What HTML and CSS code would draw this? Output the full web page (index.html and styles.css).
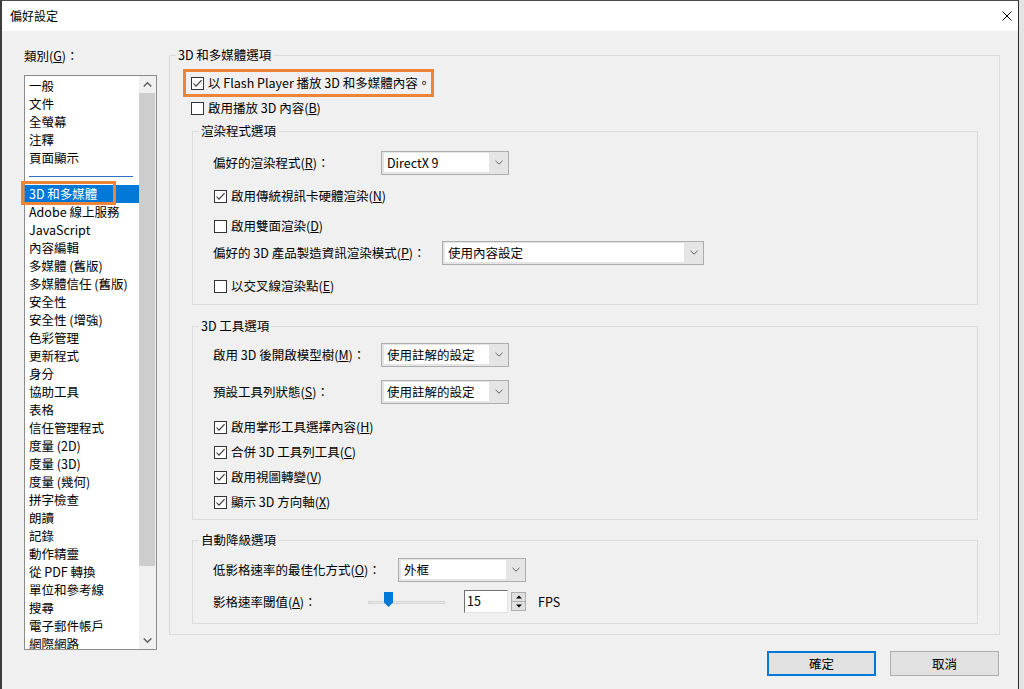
FILE: index.html
```html
<!DOCTYPE html>
<html lang="zh-Hant">
<head>
<meta charset="utf-8">
<title>偏好設定</title>
<link rel="stylesheet" href="styles.css">
</head>
<body>
<div class="window">
  <div class="titlebar">
    <span class="title">偏好設定</span>
    <svg class="close" viewBox="0 0 10 10"><path d="M0.5 0.5L9.5 9.5M9.5 0.5L0.5 9.5" stroke="#000" stroke-width="1" fill="none"/></svg>
  </div>
  <div class="client">
    <div class="main">
      <div class="left">
        <div class="cat-label">類別(<u>G</u>)：</div>
        <div class="listbox">
          <ul class="items">
            <li>一般</li>
            <li>文件</li>
            <li>全螢幕</li>
            <li>注釋</li>
            <li>頁面顯示</li>
            <li class="sep"><span class="sep-line"></span></li>
            <li class="selected">3D 和多媒體<span class="mark list-mark"></span></li>
            <li>Adobe 線上服務</li>
            <li>JavaScript</li>
            <li>內容編輯</li>
            <li>多媒體 (舊版)</li>
            <li>多媒體信任 (舊版)</li>
            <li>安全性</li>
            <li>安全性 (增強)</li>
            <li>色彩管理</li>
            <li>更新程式</li>
            <li>身分</li>
            <li>協助工具</li>
            <li>表格</li>
            <li>信任管理程式</li>
            <li>度量 (2D)</li>
            <li>度量 (3D)</li>
            <li>度量 (幾何)</li>
            <li>拼字檢查</li>
            <li>朗讀</li>
            <li>記錄</li>
            <li>動作精靈</li>
            <li>從 PDF 轉換</li>
            <li>單位和參考線</li>
            <li>搜尋</li>
            <li>電子郵件帳戶</li>
            <li>網際網路</li>
          </ul>
          <div class="vscroll">
            <div class="sbtn"><svg class="chev" viewBox="0 0 9 5"><polyline points="0.7,4.5 4.5,0.8 8.3,4.5" fill="none" stroke="#606060" stroke-width="1.5"/></svg></div>
            <div class="thumb"></div>
            <div class="track"></div>
            <div class="sbtn"><svg class="chev" viewBox="0 0 9 5"><polyline points="0.7,0.5 4.5,4.2 8.3,0.5" fill="none" stroke="#606060" stroke-width="1.5"/></svg></div>
          </div>
        </div>
      </div>

      <fieldset class="group outer">
        <legend>3D 和多媒體選項</legend>
        <div class="outer-body">
          <div class="check first-check"><span class="box"><svg viewBox="0 0 11 11"><polyline points="1.5,5.5 4,8.2 9.6,2.2" fill="none" stroke="#333" stroke-width="1.1"/></svg></span>以 Flash Player 播放 3D 和多媒體內容。<span class="mark opt-mark"></span></div>
          <div class="check gap5"><span class="box"></span>啟用播放 3D 內容(<u>B</u>)</div>

          <fieldset class="group inner g-render">
            <legend>渲染程式選項</legend>
            <div class="group-body pb8">
              <div class="field mt12">
                <span class="field-label lw168">偏好的渲染程式(<u>R</u>)：</span>
                <div class="combo"><span class="combo-text">DirectX 9</span><span class="combo-btn"><svg viewBox="0 0 8 5"><polyline points="0.5,0.8 4,4.2 7.5,0.8" fill="none" stroke="#606060" stroke-width="1"/></svg></span></div>
              </div>
              <div class="check mt11"><span class="box"><svg viewBox="0 0 11 11"><polyline points="1.5,5.5 4,8.2 9.6,2.2" fill="none" stroke="#333" stroke-width="1.1"/></svg></span>啟用傳統視訊卡硬體渲染(<u>N</u>)</div>
              <div class="check mt10"><span class="box"></span>啟用雙面渲染(<u>D</u>)</div>
              <div class="field mt5">
                <span class="field-label lw229">偏好的 3D 產品製造資訊渲染模式(<u>P</u>)：</span>
                <div class="combo wide"><span class="combo-text">使用內容設定</span><span class="combo-btn"><svg viewBox="0 0 8 5"><polyline points="0.5,0.8 4,4.2 7.5,0.8" fill="none" stroke="#606060" stroke-width="1"/></svg></span></div>
              </div>
              <div class="check mt11"><span class="box"></span>以交叉線渲染點(<u>E</u>)</div>
            </div>
          </fieldset>

          <fieldset class="group inner g-tools">
            <legend>3D 工具選項</legend>
            <div class="group-body pb5">
              <div class="field mt9">
                <span class="field-label lw168">啟用 3D 後開啟模型樹(<u>M</u>)：</span>
                <div class="combo"><span class="combo-text">使用註解的設定</span><span class="combo-btn"><svg viewBox="0 0 8 5"><polyline points="0.5,0.8 4,4.2 7.5,0.8" fill="none" stroke="#606060" stroke-width="1"/></svg></span></div>
              </div>
              <div class="field mt13">
                <span class="field-label lw168">預設工具列狀態(<u>S</u>)：</span>
                <div class="combo"><span class="combo-text">使用註解的設定</span><span class="combo-btn"><svg viewBox="0 0 8 5"><polyline points="0.5,0.8 4,4.2 7.5,0.8" fill="none" stroke="#606060" stroke-width="1"/></svg></span></div>
              </div>
              <div class="check tall mt10"><span class="box"><svg viewBox="0 0 11 11"><polyline points="1.5,5.5 4,8.2 9.6,2.2" fill="none" stroke="#333" stroke-width="1.1"/></svg></span>啟用掌形工具選擇內容(<u>H</u>)</div>
              <div class="check tall"><span class="box"><svg viewBox="0 0 11 11"><polyline points="1.5,5.5 4,8.2 9.6,2.2" fill="none" stroke="#333" stroke-width="1.1"/></svg></span>合併 3D 工具列工具(<u>C</u>)</div>
              <div class="check tall"><span class="box"><svg viewBox="0 0 11 11"><polyline points="1.5,5.5 4,8.2 9.6,2.2" fill="none" stroke="#333" stroke-width="1.1"/></svg></span>啟用視圖轉變(<u>V</u>)</div>
              <div class="check tall"><span class="box"><svg viewBox="0 0 11 11"><polyline points="1.5,5.5 4,8.2 9.6,2.2" fill="none" stroke="#333" stroke-width="1.1"/></svg></span>顯示 3D 方向軸(<u>X</u>)</div>
            </div>
          </fieldset>

          <fieldset class="group inner g-degrade">
            <legend>自動降級選項</legend>
            <div class="group-body pb10">
              <div class="field mt10">
                <span class="field-label lw185">低影格速率的最佳化方式(<u>O</u>)：</span>
                <div class="combo"><span class="combo-text">外框</span><span class="combo-btn"><svg viewBox="0 0 8 5"><polyline points="0.5,0.8 4,4.2 7.5,0.8" fill="none" stroke="#606060" stroke-width="1"/></svg></span></div>
              </div>
              <div class="field spin-row mt8">
                <span class="field-label lw155">影格速率閾值(<u>A</u>)：</span>
                <div class="slider"><span class="slider-track"></span><svg class="slider-thumb" viewBox="0 0 9 15"><polygon points="0,0 9,0 9,10.5 4.5,15 0,10.5" fill="#0078d7"/></svg></div>
                <div class="spin-edit">15</div>
                <div class="spin-btns">
                  <span class="spin-btn"><svg viewBox="0 0 6 4"><polygon points="0,3.5 3,0.5 6,3.5" fill="#000"/></svg></span>
                  <span class="spin-btn"><svg viewBox="0 0 6 4"><polygon points="0,0.5 3,3.5 6,0.5" fill="#000"/></svg></span>
                </div>
                <span class="fps">FPS</span>
              </div>
            </div>
          </fieldset>
        </div>
      </fieldset>
    </div>
    <div class="footer">
      <div class="btn default">確定</div>
      <div class="btn">取消</div>
    </div>
  </div>
</div>
</body>
</html>
```

FILE: styles.css
```css
* { box-sizing: border-box; }
html, body { margin: 0; padding: 0; }
body {
  width: 1024px;
  height: 689px;
  overflow: hidden;
  background: #e4e4e4;
  font-family: "Noto Sans CJK TC", "Noto Sans", sans-serif;
  font-size: 12px;
  color: #000;
}
u { text-underline-offset: 1px; }

.window {
  width: 1019px;
  height: 689px;
  background: #f0f0f0;
  border-top: 1px solid #4b4b4b;
  border-left: 2px solid #3d3d3d;
  border-right: 1px solid #2b2b2b;
  display: flex;
  flex-direction: column;
}
.titlebar {
  height: 30px;
  flex: none;
  background: #fff;
  display: flex;
  align-items: center;
  justify-content: space-between;
  padding: 0 6px 0 8px;
}
.title { line-height: 16px; }
.close { width: 10px; height: 10px; display: block; }

.client { flex: 1; padding: 16px 0 0 22px; font-size: 12.5px; }
.main {
  display: flex;
  align-items: flex-start;
  gap: 12px;
  padding-right: 18px;
}

/* left category list */
.left { width: 133px; flex: none; padding-top: 1px; }
.cat-label { height: 16px; line-height: 16px; }
.listbox {
  margin-top: 11px;
  height: 575px;
  border: 1px solid #8c8c8c;
  background: #fff;
  display: flex;
}
.items {
  list-style: none;
  margin: 0;
  padding: 1px 0 0;
  width: 114px;
  flex: none;
  overflow-x: visible;
  overflow-y: clip;
}
.items li {
  height: 18px;
  line-height: 18px;
  padding-left: 4px;
  white-space: nowrap;
  position: relative;
}
.items li.sep { display: flex; align-items: center; padding-top: 1px; }
.sep-line { width: 104px; height: 1px; background: #2f74c0; }
.items li.selected { background: #0078d7; color: #fff; }

.mark { position: absolute; border: 3px solid #ee8435; pointer-events: none; }
.list-mark { left: -4px; top: -4px; width: 95px; height: 24px; }
.opt-mark { left: -8px; right: -4px; top: -4px; bottom: -4px; }

.vscroll {
  width: 17px;
  flex: none;
  display: flex;
  flex-direction: column;
  background: #f0f0f0;
}
.sbtn { height: 17px; flex: none; display: flex; align-items: center; justify-content: center; }
.chev { width: 9px; height: 5px; display: block; }
.thumb { height: 473px; flex: none; background: #cdcdcd; margin-right: 1px; }
.track { flex: 1; }

/* group boxes */
.group {
  margin: 0;
  padding: 0;
  border: 1px solid #dcdcdc;
  min-width: 0;
}
.group > legend {
  margin-left: 6px;
  padding: 0 2px;
  height: 16px;
  line-height: 16px;
}
.outer { width: 831px; flex: none; }
.outer-body { padding: 0 21px 10px; }
.inner { margin-left: 1px; }
.g-render { margin-top: 5px; }
.g-tools { margin-top: 13px; }
.g-degrade { margin-top: 12px; }
.group-body { padding-left: 20px; }
.pb5 { padding-bottom: 5px; }
.pb8 { padding-bottom: 8px; }
.pb10 { padding-bottom: 10px; }

.mt5 { margin-top: 5px; }
.mt8 { margin-top: 8px; }
.mt9 { margin-top: 9px; }
.mt10 { margin-top: 10px; }
.mt11 { margin-top: 11px; }
.mt12 { margin-top: 12px; }
.mt13 { margin-top: 13px; }

/* checkboxes */
.check {
  display: flex;
  align-items: center;
  height: 20px;
  line-height: 16px;
  width: max-content;
  position: relative;
  white-space: nowrap;
}
.check.tall { height: 25px; }
.first-check { margin-top: 10px; }
.gap5 { margin-top: 5px; }
.group-body .check { margin-left: 1px; }
.box {
  width: 13px;
  height: 13px;
  flex: none;
  border: 1px solid #333;
  background: #fff;
  margin-right: 4px;
  margin-top: 1px;
  display: flex;
}
.box svg { width: 11px; height: 11px; display: block; }

/* label + control rows */
.field { display: flex; align-items: center; height: 24px; white-space: nowrap; }
.field-label { flex: none; line-height: 16px; }
.lw155 { width: 155px; }
.lw168 { width: 168px; }
.lw185 { width: 185px; }
.lw229 { width: 229px; }

.combo {
  width: 128px;
  height: 24px;
  flex: none;
  display: flex;
  border: 1px solid #adadad;
  background: #e5e5e5;
  padding: 1px 0 2px 2px;
}
.combo.wide { width: 262px; }
.combo-text {
  flex: 1;
  background: #fff;
  padding-left: 3px;
  line-height: 19px;
  overflow: hidden;
}
.combo-btn { width: 19px; flex: none; display: flex; align-items: center; justify-content: center; }
.combo-btn svg { width: 8px; height: 5px; display: block; }

/* slider + spinner */
.spin-row { height: 23px; }
.slider { width: 77px; height: 15px; flex: none; position: relative; display: flex; align-items: center; margin-top: 2px; }
.slider-track { width: 77px; height: 3px; background: #e7eaea; border: 1px solid #d6d6d6; }
.slider-thumb { position: absolute; left: 16px; top: -3px; width: 9px; height: 15px; }
.spin-edit {
  width: 44px;
  height: 23px;
  flex: none;
  margin-left: 19px;
  background: #fff;
  border-top: 1px solid #6e6e6e;
  border-left: 1px solid #6e6e6e;
  border-right: 1px solid #e3e3e3;
  border-bottom: 1px solid #e3e3e3;
  padding-left: 2px;
  line-height: 20px;
}
.spin-btns {
  width: 15px;
  height: 19px;
  flex: none;
  margin-left: 3px;
  display: flex;
  flex-direction: column;
  border: 1px solid #adadad;
  background: #e1e1e1;
}
.spin-btn { flex: 1; display: flex; align-items: center; justify-content: center; }
.spin-btn + .spin-btn { border-top: 1px solid #adadad; }
.spin-btn svg { width: 6px; height: 4px; display: block; }
.fps { margin-left: 12px; line-height: 16px; }

/* buttons */
.footer {
  display: flex;
  justify-content: flex-end;
  gap: 14px;
  margin-top: 1px;
  padding-right: 19px;
}
.btn {
  width: 109px;
  height: 25px;
  border: 1px solid #adadad;
  background: #e1e1e1;
  display: flex;
  align-items: center;
  justify-content: center;
  line-height: 16px;
}
.btn.default { border: 2px solid #0078d7; }
```
